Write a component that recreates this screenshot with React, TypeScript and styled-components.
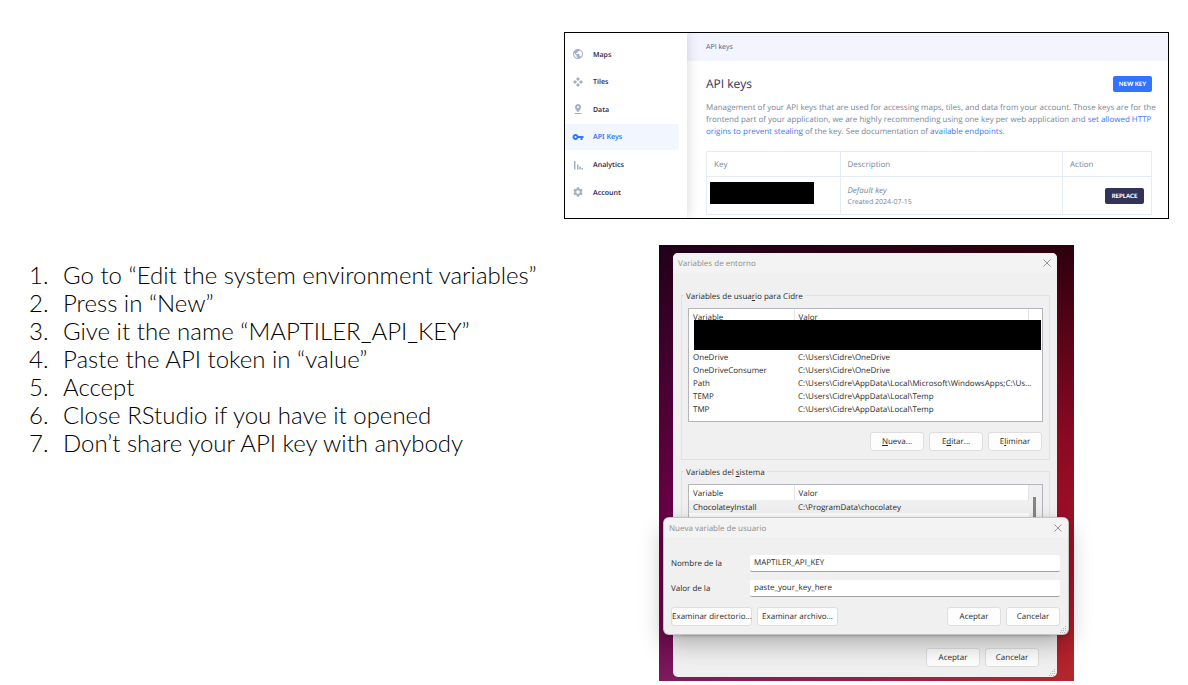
import React from 'react';
import styled, { createGlobalStyle, css } from 'styled-components';
import { MdPublic, MdPinDrop, MdVpnKey, MdSettings } from 'react-icons/md';

const GlobalStyle = createGlobalStyle`
  *, *::before, *::after { box-sizing: border-box; }
  body {
    margin: 0;
    background: #fff;
    font-family: "Open Sans", "Noto Sans", sans-serif;
    text-rendering: geometricPrecision;
  }
  button, input { font: inherit; color: inherit; text-rendering: inherit; }
  table { border-collapse: collapse; border-spacing: 0; }
  h1, p, ol, ul { margin: 0; padding: 0; }
`;

const Slide = styled.main`
  display: grid;
  grid-template-columns: 535fr 605fr;
  row-gap: 26px;
  padding: 32px 19px 4px 29px;
`;

/* Numbered instructions */
const Steps = styled.ol`
  list-style: none;
  padding-top: 16px;
  font-family: Lato, sans-serif;
  font-weight: 300;
  font-size: 24px;
  line-height: 28px;
  text-rendering: auto;
  color: #000;
  white-space: nowrap;
`;
const Step = styled.li`
  display: grid;
  grid-template-columns: 34px 1fr;
`;

/* Web console card */
const Console = styled.section`
  grid-column: 2;
  display: grid;
  grid-template-columns: 122px 1fr;
  height: 187px;
  border: 1px solid #000;
  overflow: hidden;
`;
const Sidebar = styled.nav`
  padding: 8px 8px 0 0;
  box-shadow: 0 0 12px rgba(40, 40, 70, 0.2);
  z-index: 1;
`;
const NavList = styled.ul`
  display: grid;
  grid-auto-rows: 1fr;
  height: 166px;
  list-style: none;
`;
const NavLink = styled.a<{ $active?: boolean }>`
  display: flex;
  align-items: center;
  gap: 9px;
  height: 26px;
  padding-left: 7px;
  border-radius: 0 2px 2px 0;
  font-family: "Noto Sans", sans-serif;
  font-size: 7px;
  font-weight: 600;
  text-decoration: none;
  color: ${(p) => (p.$active ? '#3174ff' : '#333359')};
  background: ${(p) => (p.$active ? '#f2f6ff' : 'transparent')};
  svg { width: 12px; height: 12px; color: ${(p) => (p.$active ? '#3174ff' : '#a3b1c8')}; }
  span { padding-top: 2px; }
`;
const Crumb = styled.div`
  height: 28px;
  padding: 1px 0 0 19px;
  line-height: 28px;
  font-size: 7px;
  color: #555770;
  background: #f2f5ff;
`;
const ConsoleMain = styled.div`
  padding: 15px 16px 0 19px;
  font-size: 8px;
  line-height: 12px;
  color: #75879b;
`;
const TitleRow = styled.div`
  display: flex;
  justify-content: space-between;
  align-items: center;
  height: 16px;
  margin-bottom: 10px;
`;
const Title = styled.h1`
  font-size: 12px;
  font-weight: 400;
  color: #333359;
`;
const Pill = styled.button<{ $dark?: boolean }>`
  width: 39px;
  height: 16px;
  padding: 1px 0 0;
  border: 0;
  border-radius: 2px;
  font-family: Lato, sans-serif;
  font-size: 6px;
  font-weight: 900;
  line-height: 16px;
  vertical-align: middle;
  color: #fff;
  background: ${(p) => (p.$dark ? '#333359' : '#3174ff')};
`;
const Intro = styled.p`
  margin-right: -8px;
`;
const TextLink = styled.a`
  color: #3c74ff;
  text-decoration: none;
`;
const KeyTable = styled.table`
  width: 100%;
  margin-top: 13px;
  table-layout: fixed;
  th, td { border: 1px solid #e6ebf8; padding: 2px 7px 0; text-align: left; font-weight: 400; }
  th { height: 25px; }
  td { height: 38px; }
  th:first-child { width: 30%; }
  th:nth-child(2) { width: 50%; }
  td:first-child { padding: 0 3px; }
  td:last-child { padding-top: 0; text-align: right; }
`;
const Created = styled.div`
  font-size: 7px;
`;
const KeyMask = styled.div`
  width: 104px;
  height: 22px;
  margin-top: -6px;
  background: #000;
`;

/* Desktop with system dialogs */
const Desktop = styled.section`
  grid-column: 2;
  justify-self: center;
  position: relative;
  width: 415px;
  max-width: 100%;
  padding: 8px 17px 4px 14px;
  background: linear-gradient(180deg, #22001a 0%, #480034 32%, #660046 60%, #700c50 90%, #7c1c60 100%);
  font-size: 8px;
  line-height: 13px;
  color: #2a2a2a;
  &::before {
    content: "";
    position: absolute;
    inset: 0;
    background: linear-gradient(180deg, #2c000c 0%, #5c0418 22%, #8c0a22 45%, #a81324 75%, #b4282c 100%);
    mask-image: linear-gradient(90deg, transparent, #000);
  }
`;
const windowFrame = css`
  border-radius: 5px;
  background: #f0f0f0;
  overflow: hidden;
`;
const EnvWindow = styled.div`
  ${windowFrame}
  position: relative;
  height: 424px;
`;
const TitleBar = styled.header`
  display: flex;
  justify-content: space-between;
  align-items: center;
  height: 20px;
  padding: 0 5px;
  background: #f3f3f3;
  color: #8d8d8d;
`;
const CloseButton = styled.button`
  display: flex;
  padding: 0;
  border: 0;
  background: none;
  color: #8a8a8a;
`;
const Group = styled.fieldset<{ $first?: boolean }>`
  min-width: 0;
  margin: ${(p) => (p.$first ? '16px 7px 0 8px' : '5px 7px 0 8px')};
  padding: 6px 6px 8px 6px;
  border: 1px solid #e2e2e2;
`;
const Legend = styled.legend`
  height: 13px;
  margin-left: -4px;
  padding: 0 2px;
  line-height: 15px;
`;
const ListFrame = styled.div`
  position: relative;
  height: 114px;
  border: 1px solid #b4b4bc;
  background: #fff;
  overflow: hidden;
`;
const VarTable = styled.table`
  width: calc(100% - 13px);
  table-layout: fixed;
  th, td {
    height: 13px;
    padding: 2px 0 0 4px;
    font-weight: 400;
    text-align: left;
    line-height: 11px;
    white-space: nowrap;
  }
  th { height: 15px; border-right: 1px solid #e6e6e6; }
  th:first-child { width: 105px; }
`;
const VarRow = styled.tr<{ $shaded?: boolean }>`
  background: ${(p) => (p.$shaded ? '#f0f0f0' : 'transparent')};
`;
const ListMask = styled.div`
  position: absolute;
  top: 11px;
  left: 5px;
  right: 1px;
  height: 30px;
  background: #000;
`;
const ScrollTrack = styled.div`
  position: absolute;
  top: 0;
  right: 0;
  bottom: 0;
  width: 13px;
  padding: 12px 5px 12px 4px;
  background: #f0f0f0;
`;
const ScrollThumb = styled.div`
  width: 3px;
  height: 40px;
  background: #858585;
`;
const ButtonRow = styled.div<{ $pad?: string }>`
  display: flex;
  justify-content: flex-end;
  gap: 5px;
  padding: ${(p) => p.$pad || '0'};
`;
const DialogButton = styled.button<{ $wide?: boolean }>`
  width: ${(p) => (p.$wide ? '81px' : '54px')};
  height: 19px;
  padding: 0;
  border: 1px solid #dedede;
  border-radius: 3px;
  line-height: 17px;
  white-space: nowrap;
  background: #fdfdfd;
`;
const Spacer = styled.span`
  flex: 1;
`;
const NewVarWindow = styled.form`
  position: absolute;
  top: 273px;
  left: 5px;
  right: 6px;
  height: 116px;
`;
const NewVarPane = styled.div`
  ${windowFrame}
  position: relative;
  height: 100%;
  box-shadow: 0 0 0 1px #c4c4c4, 0 10px 24px rgba(0, 0, 0, 0.28), 0 1px 4px rgba(0, 0, 0, 0.3);
`;
const Fields = styled.div`
  display: grid;
  grid-template-columns: 79px 1fr;
  row-gap: 8px;
  align-items: center;
  padding: 17px 8px 10px 7px;
`;
const Field = styled.input`
  width: 100%;
  height: 17px;
  padding: 0 4px 2px;
  border: 0;
  border-bottom: 1px solid #a2a2a2;
  border-radius: 2px;
  background: #fff;
  outline: 0;
`;
const GripIcon = styled.svg`
  position: absolute;
  right: 1px;
  bottom: 1px;
`;

const Grip = () => (
  <GripIcon width="7" height="7" viewBox="0 0 7 7" fill="#b9b9b9">
    <path d="M5 0h1v1H5zM3 2h1v1H3zM5 2h1v1H5zM1 4h1v1H1zM3 4h1v1H3zM5 4h1v1H5zM0 6h1v1H0zM2 6h1v1H2zM4 6h1v1H4z" />
  </GripIcon>
);
const Close = () => (
  <CloseButton type="button" aria-label="Cerrar">
    <svg width="10" height="10" viewBox="0 0 10 10" stroke="currentColor" strokeWidth="0.9" fill="none">
      <path d="M1.5 1.5l7 7M8.500 1.500l-7 7" />
    </svg>
  </CloseButton>
);
const TilesIcon = () => (
  <svg viewBox="0 0 24 24" fill="currentColor">
    <path d="M12 2l4 4-4 4-4-4zM12 14l4 4-4 4-4-4zM6 8l4 4-4 4-4-4zM18 8l4 4-4 4-4-4z" />
  </svg>
);
const AnalyticsIcon = () => (
  <svg viewBox="0 0 24 24" fill="currentColor">
    <path d="M4 4h3v17H4zM10 11h3v10h-3zM14.500 15h3v6h-3zM19 18h3v3h-3z" />
  </svg>
);

const nav = [
  { label: 'Maps', icon: <MdPublic /> },
  { label: 'Tiles', icon: <TilesIcon /> },
  { label: 'Data', icon: <MdPinDrop /> },
  { label: 'API Keys', icon: <MdVpnKey />, active: true },
  { label: 'Analytics', icon: <AnalyticsIcon /> },
  { label: 'Account', icon: <MdSettings /> },
];
const steps = [
  'Go to “Edit the system environment variables”',
  'Press in “New”',
  'Give it the name “MAPTILER_API_KEY”',
  'Paste the API token in “value”',
  'Accept',
  'Close RStudio if you have it opened',
  'Don’t share your API key with anybody',
];
const userVars = [
  ['', ''],
  ['', ''],
  ['OneDrive', 'C:\\Users\\Cidre\\OneDrive'],
  ['OneDriveConsumer', 'C:\\Users\\Cidre\\OneDrive'],
  ['Path', 'C:\\Users\\Cidre\\AppData\\Local\\Microsoft\\WindowsApps;C:\\Us...'],
  ['TEMP', 'C:\\Users\\Cidre\\AppData\\Local\\Temp'],
  ['TMP', 'C:\\Users\\Cidre\\AppData\\Local\\Temp'],
];
const systemVars = [
  ['ChocolateyInstall', 'C:\\ProgramData\\chocolatey'],
  ['ComSpec', 'C:\\Windows\\system32\\cmd.exe'],
];

const Variables = ({ rows, shadeFirst }: { rows: string[][]; shadeFirst?: boolean }) => (
  <VarTable>
    <thead>
      <tr><th>Variable</th><th>Valor</th></tr>
    </thead>
    <tbody>
      {rows.map(([name, value], i) => (
        <VarRow key={i} $shaded={shadeFirst && i === 0}>
          <td>{name}</td>
          <td>{value}</td>
        </VarRow>
      ))}
    </tbody>
  </VarTable>
);

export default function App() {
  return (
    <>
      <GlobalStyle />
      <Slide>
        <Console>
          <Sidebar>
            <NavList>
              {nav.map((n) => (
                <li key={n.label}>
                  <NavLink href="#" $active={n.active}>{n.icon}<span>{n.label}</span></NavLink>
                </li>
              ))}
            </NavList>
          </Sidebar>
          <div>
            <Crumb>API keys</Crumb>
            <ConsoleMain>
              <TitleRow>
                <Title>API keys</Title>
                <Pill>NEW KEY</Pill>
              </TitleRow>
              <Intro>
                Management of your API keys that are used for accessing maps, tiles, and data from your account. Those keys are for the
                frontend part of your application, we are highly recommending using one key per web application and{' '}
                <TextLink href="#">set allowed HTTP origins to prevent stealing</TextLink> of the key. See documentation of{' '}
                <TextLink href="#">available endpoints</TextLink>.
              </Intro>
              <KeyTable>
                <thead>
                  <tr><th>Key</th><th>Description</th><th>Action</th></tr>
                </thead>
                <tbody>
                  <tr>
                    <td><KeyMask /></td>
                    <td><em>Default key</em><Created>Created 2024-07-15</Created></td>
                    <td><Pill $dark>REPLACE</Pill></td>
                  </tr>
                </tbody>
              </KeyTable>
            </ConsoleMain>
          </div>
        </Console>

        <Steps>
          {steps.map((s, i) => (
            <Step key={s}><span>{i + 1}.</span><span>{s}</span></Step>
          ))}
        </Steps>

        <Desktop>
          <EnvWindow>
            <TitleBar><span>Variables de entorno</span><Close /></TitleBar>
            <Group $first>
              <Legend>Variables de usua<u>r</u>io para Cidre</Legend>
              <ListFrame>
                <Variables rows={userVars} />
                <ListMask />
              </ListFrame>
              <ButtonRow $pad="10px 1px 0 0">
                <DialogButton type="button"><u>N</u>ueva...</DialogButton>
                <DialogButton type="button">E<u>d</u>itar...</DialogButton>
                <DialogButton type="button">E<u>l</u>iminar</DialogButton>
              </ButtonRow>
            </Group>
            <Group>
              <Legend>Variables del <u>s</u>istema</Legend>
              <ListFrame>
                <Variables rows={systemVars} shadeFirst />
                <ScrollTrack><ScrollThumb /></ScrollTrack>
              </ListFrame>
              <ButtonRow $pad="10px 1px 0 0">
                <DialogButton type="button">Nueva...</DialogButton>
                <DialogButton type="button">Editar...</DialogButton>
                <DialogButton type="button">Eliminar</DialogButton>
              </ButtonRow>
            </Group>
            <ButtonRow $pad="12px 18px 0">
              <DialogButton type="button">Aceptar</DialogButton>
              <DialogButton type="button">Cancelar</DialogButton>
            </ButtonRow>
            <Grip />
          </EnvWindow>
          <NewVarWindow>
            <NewVarPane>
              <TitleBar><span>Nueva variable de usuario</span><Close /></TitleBar>
              <Fields>
                <label htmlFor="var-name">Nombre de la</label>
                <Field id="var-name" defaultValue="MAPTILER_API_KEY" />
                <label htmlFor="var-value">Valor de la</label>
                <Field id="var-value" defaultValue="paste_your_key_here" />
              </Fields>
              <ButtonRow $pad="0 8px 0 7px">
                <DialogButton type="button" $wide>Examinar directorio...</DialogButton>
                <DialogButton type="button" $wide>Examinar archivo...</DialogButton>
                <Spacer />
                <DialogButton type="submit">Aceptar</DialogButton>
                <DialogButton type="button">Cancelar</DialogButton>
              </ButtonRow>
              <Grip />
            </NewVarPane>
          </NewVarWindow>
        </Desktop>
      </Slide>
    </>
  );
}
